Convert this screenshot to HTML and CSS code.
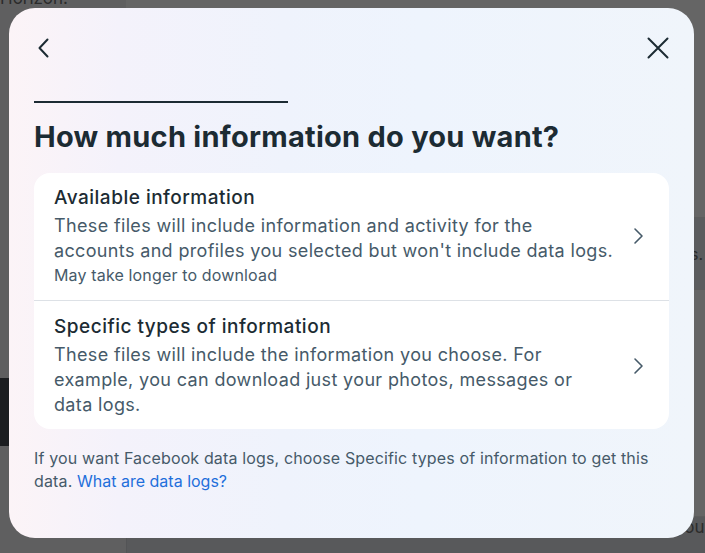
FILE: index.html
```html
<!DOCTYPE html>
<html lang="en">
<head>
<meta charset="utf-8">
<title>How much information do you want?</title>
<link rel="stylesheet" href="styles.css">
</head>
<body>
<div class="backdrop">
  <div class="bg-col bg-col-left">
    <span class="bg-title">Horizon.</span>
    <div class="bg-dark"></div>
  </div>
  <div class="bg-col bg-col-main">
    <div class="bg-row bg-row-a"></div>
    <div class="bg-row bg-row-b"><span class="bg-text">s.</span></div>
    <div class="bg-row bg-row-c"></div>
    <div class="bg-foot"><span class="bg-text">g</span><span class="bg-text">your</span></div>
  </div>
</div>

<div class="modal" role="dialog" aria-labelledby="modal-title">
  <div class="modal-header">
    <button class="icon-btn" aria-label="Back">
      <svg width="24" height="24" viewBox="0 0 24 24" fill="none"><path d="M15.5 3.5 7.5 12l8 8.5" stroke="#1c2b33" stroke-width="2" stroke-linecap="round" stroke-linejoin="round"/></svg>
    </button>
    <button class="icon-btn" aria-label="Close">
      <svg width="24" height="24" viewBox="0 0 24 24" fill="none"><path d="M2.5 2.5l19 19M21.5 2.5l-19 19" stroke="#1c2b33" stroke-width="2" stroke-linecap="round"/></svg>
    </button>
  </div>
  <div class="progress"></div>
  <h1 id="modal-title" class="modal-title">How much information do you want?</h1>

  <div class="card">
    <div class="option option-first">
      <div class="option-text">
        <div class="option-title">Available information</div>
        <div class="option-desc">These files will include information and activity for the<br>accounts and profiles you selected but won't include data logs.</div>
        <div class="option-note">May take longer to download</div>
      </div>
      <svg class="chevron" width="24" height="24" viewBox="0 0 24 24" fill="none"><path d="M9 5l7 7-7 7" stroke="#465a69" stroke-width="1.6" stroke-linecap="round" stroke-linejoin="round"/></svg>
    </div>
    <div class="divider"></div>
    <div class="option option-second">
      <div class="option-text">
        <div class="option-title">Specific types of information</div>
        <div class="option-desc">These files will include the information you choose. For<br>example, you can download just your photos, messages or<br>data logs.</div>
      </div>
      <svg class="chevron" width="24" height="24" viewBox="0 0 24 24" fill="none"><path d="M9 5l7 7-7 7" stroke="#465a69" stroke-width="1.6" stroke-linecap="round" stroke-linejoin="round"/></svg>
    </div>
  </div>

  <p class="footnote">If you want Facebook data logs, choose Specific types of information to get this data. <a href="#" class="link">What are data logs?</a></p>
</div>
</body>
</html>
```

FILE: styles.css
```css
* { box-sizing: border-box; }

html, body {
  margin: 0;
  padding: 0;
  width: 705px;
  height: 553px;
  overflow: hidden;
}

body {
  font-family: Inter, "Noto Sans", Roboto, sans-serif;
  background: #636363;
  position: relative;
}

/* ---------- dimmed page behind the dialog ---------- */
.backdrop {
  display: flex;
  height: 553px;
  color: #2a2a2a;
}

.bg-col { height: 100%; }

.bg-col-left {
  width: 126px;
  background: #5f5f60;
  display: flex;
  flex-direction: column;
}

.bg-title {
  font-size: 17px;
  line-height: 17px;
  margin-top: -10px;
  color: #2b2b2b;
}

.bg-dark {
  margin-top: 371px;
  height: 68px;
  background: #1b1d20;
}

.bg-col-main {
  flex: 1;
  display: flex;
  flex-direction: column;
  background: #656565;
}

.bg-row { border-bottom: 1px solid #5c5c5c; }
.bg-row-a { height: 218px; }
.bg-row-b {
  height: 72px;
  background: #5b5c5e;
  display: flex;
  justify-content: flex-end;
  align-items: center;
  padding-right: 2px;
  font-size: 16px;
}
.bg-row-c { flex: 1; }

.bg-foot {
  height: 36px;
  display: flex;
  justify-content: space-between;
  padding: 0 0 0 355px;
  font-size: 17px;
  color: #2c2c2c;
  margin-right: -6px;
  background: #58595b;
  border-left: 1px solid #535456;
}

/* ---------- dialog ---------- */
.modal {
  position: absolute;
  left: 9px;
  top: 8px;
  width: 685px;
  height: 530px;
  border-radius: 26px;
  padding: 0 25px;
  background: linear-gradient(90deg, #fcf4f7 0%, #f4f2fb 16%, #eff3fc 40%, #eef4fd 60%, #f0f5fb 100%);
  color: #1c2b33;
  overflow: hidden;
}

.modal-header {
  display: flex;
  justify-content: space-between;
  padding-top: 28px;
  margin: 0 -1px 0 -2px;
}

.icon-btn {
  width: 24px;
  height: 24px;
  padding: 0;
  border: 0;
  background: none;
  display: flex;
}

.progress {
  margin-top: 41px;
  width: 254px;
  height: 2px;
  background: #1c2b33;
}

.modal-title {
  margin: 16px 0 0;
  font-size: 29px;
  line-height: 36px;
  font-weight: 700;
  letter-spacing: 0.25px;
  color: #1c2b33;
}

.card {
  margin-top: 18px;
  background: #ffffff;
  border-radius: 16px;
  overflow: hidden;
}

.option {
  display: flex;
  align-items: center;
  gap: 12px;
  padding: 13px 19px 15px 20px;
}

.option-second { padding: 14px 19px 12px 20px; }

.option-text { flex: 1; min-width: 0; }

.option-title {
  font-size: 19px;
  line-height: 24px;
  font-weight: 500;
  letter-spacing: 0.5px;
  color: #1c2b33;
}

.option-desc {
  margin-top: 3px;
  font-size: 18px;
  line-height: 25px;
  letter-spacing: 0.35px;
  white-space: nowrap;
  color: #465a69;
}

.option-note {
  margin-top: 2px;
  font-size: 16px;
  line-height: 20px;
  letter-spacing: 0.15px;
  color: #465a69;
}

.chevron { flex: none; }

.divider {
  height: 1px;
  background: #dde1e6;
}

.footnote {
  margin: 18px 0 0;
  font-size: 16px;
  line-height: 23px;
  letter-spacing: 0.14px;
  color: #465a69;
}

.link {
  color: #1f6fdb;
  text-decoration: none;
  letter-spacing: 0;
}
```
